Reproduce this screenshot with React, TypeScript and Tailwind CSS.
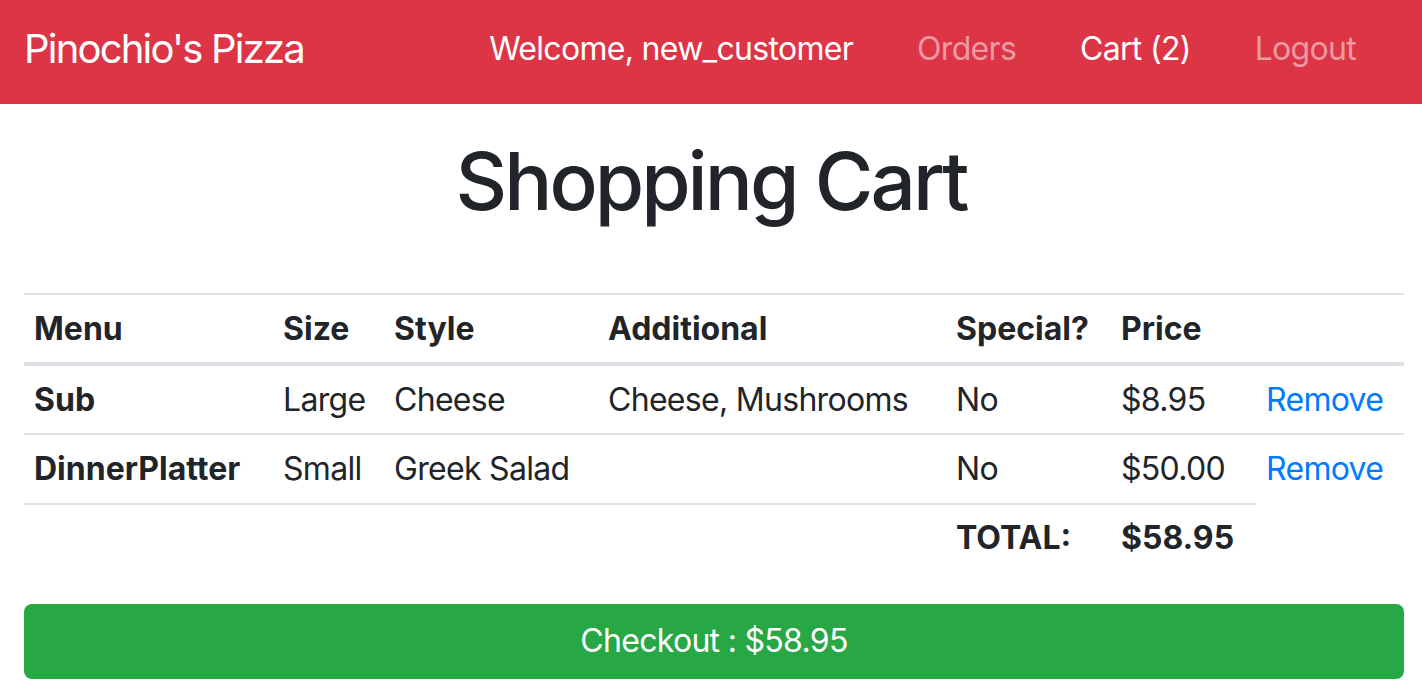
import React from "react";

const rows = [
  { menu: "Sub", size: "Large", style: "Cheese", add: "Cheese, Mushrooms", special: "No", price: "$8.95" },
  { menu: "DinnerPlatter", size: "Small", style: "Greek Salad", add: "", special: "No", price: "$50.00" },
];

const cell = "border-t-2 border-[#dee2e6] px-[10px] py-[9.6px] whitespace-nowrap overflow-visible";

export default function App() {
  return (
    <div className="min-h-[698px] overflow-hidden bg-white text-[#212529]" style={{ fontFamily: "Inter, 'Noto Sans', sans-serif" }}>
      <nav className="flex h-[104px] items-center justify-between bg-[#dc3545] pb-[6px] pl-[24px] pr-[34px]">
        <span className="text-[40px] leading-[60px] tracking-[-1.8px] text-white">Pinochio's Pizza</span>
        <div className="flex items-center text-[32px] leading-[48px] tracking-[-0.7px]">
          <span className="px-[32px] text-white">Welcome, new_customer</span>
          <span className="px-[32px] text-[#ee9aa2]">Orders</span>
          <span className="px-[32px] text-white">Cart (2)</span>
          <span className="px-[32px] text-[#ee9aa2]">Logout</span>
        </div>
      </nav>
      <h1 className="mt-[29px] text-center text-[80px] font-medium leading-[96px] tracking-[-3px]">Shopping Cart</h1>
      <div className="pl-[24px] pr-[18px] pt-[64px]">
        <table className="w-[1380px] table-fixed border-collapse text-[32px] leading-[48px] tracking-[-0.7px]">
          <colgroup>
            <col className="w-[249px]" />
            <col className="w-[111px]" />
            <col className="w-[214px]" />
            <col className="w-[348px]" />
            <col className="w-[165px]" />
            <col className="w-[145px]" />
            <col className="w-[148px]" />
          </colgroup>
          <thead>
            <tr>
              {["Menu", "Size", "Style", "Additional", "Special?", "Price", ""].map((h, i) => (
                <th
                  key={i}
                  className="border-t-2 border-b-4 border-[#dee2e6] px-[10px] py-[9.6px] text-left font-bold tracking-normal whitespace-nowrap"
                >
                  {h}
                </th>
              ))}
            </tr>
          </thead>
          <tbody>
            {rows.map((r) => (
              <tr key={r.menu}>
                <td className={`${cell} font-bold tracking-normal`}>{r.menu}</td>
                <td className={cell}>{r.size}</td>
                <td className={cell}>{r.style}</td>
                <td className={cell}>{r.add}</td>
                <td className={cell}>{r.special}</td>
                <td className={cell}>{r.price}</td>
                <td className={`${cell} text-[#007bff]`}>Remove</td>
              </tr>
            ))}
            <tr>
              <td colSpan={4} className={cell}></td>
              <td className={`${cell} font-bold tracking-normal`}>TOTAL:</td>
              <td className={`${cell} font-bold tracking-normal`}>$58.95</td>
            </tr>
          </tbody>
        </table>
        <button className="mt-[32px] flex h-[75px] w-[1380px] items-center justify-center rounded-[8px] bg-[#28a745] text-[32px] leading-[48px] tracking-[-0.7px] text-white">
          Checkout : $58.95
        </button>
      </div>
    </div>
  );
}
